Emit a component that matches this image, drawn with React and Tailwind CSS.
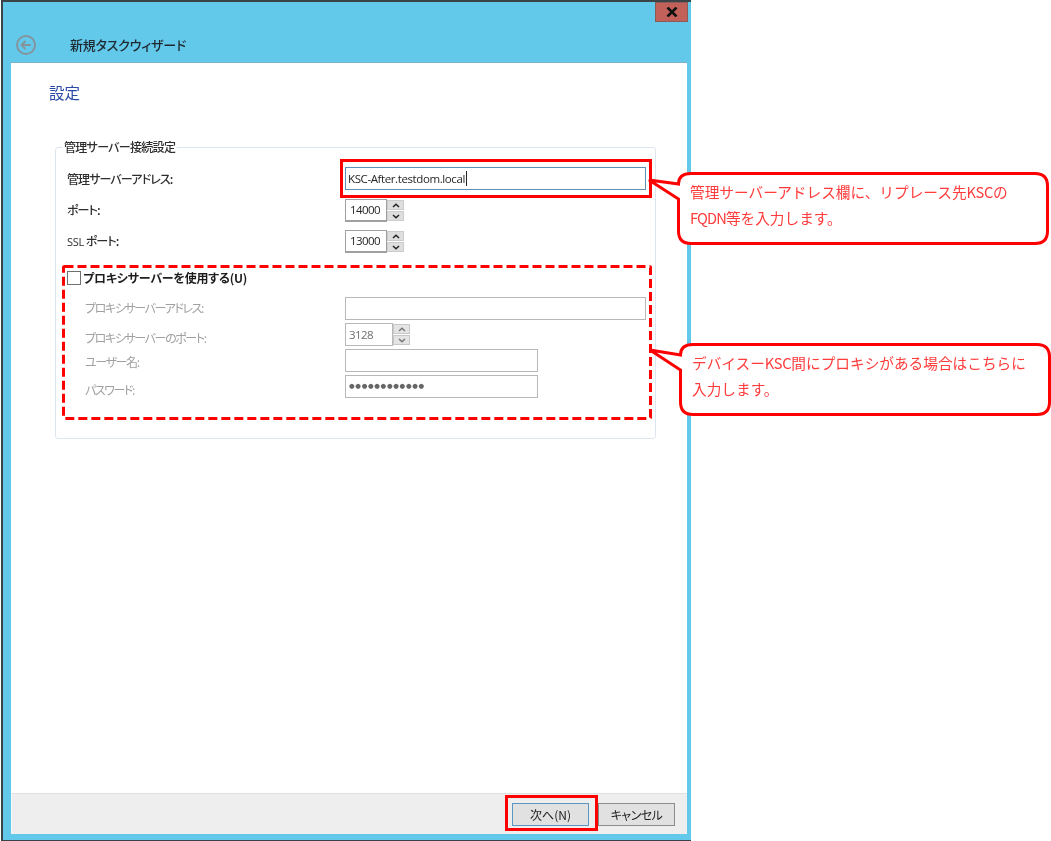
const jp = "font-['Noto_Sans_CJK_JP','Noto_Sans',sans-serif] [font-feature-settings:'palt']";

function Field({ w = "w-[301px]", disabled, active, children }) {
  const border = active ? "border-[#5f8fb5]" : disabled ? "border-[#b8b8b8]" : "border-[#a9a9a9]";
  return (
    <div className={`${w} shrink-0 h-[23px] border ${border} bg-white flex items-center pl-[2px] text-[11.5px] font-['Open_Sans',sans-serif] ${disabled ? "text-[#6d6d6d]" : "text-[#262626]"}`}>
      {children}
    </div>
  );
}

function Chevron({ up, disabled }) {
  return (
    <svg width="8" height="5" viewBox="0 0 8 5" fill="none" stroke={disabled ? "#777" : "#222"} strokeWidth="1.5">
      <path d={up ? "M1 4L4 1.2L7 4" : "M1 1L4 3.8L7 1"} />
    </svg>
  );
}

function Spin({ value, disabled }) {
  const btn = "h-[10px] w-[17px] flex items-center justify-center " + (disabled ? "bg-[#e4e4e4] border border-[#c8c8c8]" : "bg-[#dedede] border border-[#cccccc]");
  return (
    <div className="flex h-[23px] shrink-0">
      <div className={`${disabled ? "w-[48px] border-[#b8b8b8] text-[#6d6d6d] pl-[3px]" : "w-[42px] border-[#a0a0a0] border-b-2 text-[#262626] pl-[4px]"} border bg-white flex items-center text-[11.5px] tracking-[-0.6px] font-['Open_Sans',sans-serif]`}>
        {value}
      </div>
      <div className="flex flex-col justify-center gap-[1px]">
        <div className={btn}><Chevron up disabled={disabled} /></div>
        <div className={btn}><Chevron disabled={disabled} /></div>
      </div>
    </div>
  );
}

function Row({ label, mt, disabled, shift = "", children }) {
  return (
    <div className={`flex items-center h-[23px] ${mt}`}>
      <div className={`${disabled ? "w-[260px] ml-[18px] text-[#a0a0a0] tracking-[-1.4px]" : "w-[278px] text-[#2e2e2e] font-medium tracking-[-0.9px]"} shrink-0 text-[12px] leading-none ${shift}`}>
        {label}
      </div>
      {children}
    </div>
  );
}

function Bubble({ width, height, tip, className, children }) {
  const w = width, h = height, r = 14;
  const d = `M${r} 1.5 H${w - r} Q${w - 1.5} 1.5 ${w - 1.5} ${r} V${h - r} Q${w - 1.5} ${h - 1.5} ${w - r} ${h - 1.5} H${r} Q1.5 ${h - 1.5} 1.5 ${h - r} V27 L${tip[0]} ${tip[1]} L1.5 12 Q1.5 1.5 ${r} 1.5 Z`;
  return (
    <div className={`absolute ${className}`}>
      <svg className="absolute left-0 top-0 overflow-visible" width={w} height={h} fill="white" stroke="#ff0000" strokeWidth="3">
        <path d={d} />
      </svg>
      <div className="relative pl-[13px] pt-[7px] text-[14.67px] leading-[26px] text-[#ff3b3b] font-['Noto_Sans_CJK_JP',sans-serif] [font-feature-settings:normal]">
        {children}
      </div>
    </div>
  );
}

const Ksc = () => <span className="tracking-[-0.3px]">KSC</span>;

export default function App() {
  return (
    <div className={`relative w-[1051px] h-[841px] bg-white overflow-hidden blur-[0.4px] ${jp}`}>
      <div className="w-[690px] h-[841px] ml-[1px] border-l-2 border-t-2 border-b border-l-[#3a4347] border-t-[#3a4347] border-b-[#3a4347] bg-[#63c9eb] flex flex-col">
        <div className="h-[60px] shrink-0 relative flex items-end">
          <div className="flex items-center h-[36px] ml-[12px] pt-[1px]">
            <svg width="22" height="22" viewBox="0 0 22 22" fill="none" stroke="#84949c" strokeWidth="2">
              <circle cx="11" cy="11" r="9" />
              <path d="M16 11H7M10.5 7L6.5 11L10.5 15" />
            </svg>
            <div className="ml-[33px] text-[13px] font-medium text-[#1f2a30] tracking-[-0.2px]">新規タスクウィザード</div>
          </div>
          <div className="absolute right-[3px] top-0 w-[33px] h-[20px] bg-[#c2605a] border border-[#8e5a55] flex items-center justify-center">
            <svg width="12" height="10" viewBox="0 0 12 10" stroke="#111" strokeWidth="2.6" fill="none">
              <path d="M1.5 0.5L10.5 9.5M10.5 0.5L1.5 9.5" />
            </svg>
          </div>
        </div>

        <div className="flex-1 ml-[8px] mr-[4px] mb-[6px] flex flex-col border-t border-[#7fb0c6] min-h-0">
          <div className="flex-1 bg-white pl-[39px] pr-[31px] min-h-0">
            <div className="text-[15.5px] leading-[22px] text-[#2b4aa8] mt-[18px] ml-[-1px]">設定</div>
            <div className="relative mt-[44px] ml-[5px] w-[601px] h-[292px] border border-[#dde6ee] rounded-[3px] px-[11px] pt-[19px]">
              <div className="absolute left-[6px] top-[-8px] bg-white px-[2px] text-[12px] leading-[14px] font-medium text-[#2e2e2e] tracking-[-0.7px]">管理サーバー接続設定</div>
              <Row label="管理サーバーアドレス:">
                <Field active>
                  <span className="tracking-[-0.4px]">KSC-After.testdom.local</span>
                  <span className="w-[1px] h-[15px] bg-[#222] ml-[1px]" />
                </Field>
              </Row>
              <Row label="ポート:" mt="mt-[9px]" shift="-translate-y-[1px]"><Spin value="14000" /></Row>
              <Row label={<><span className="font-['Open_Sans',sans-serif] text-[11px] tracking-[-0.3px]">SSL</span> ポート:</>} mt="mt-[8px]" shift="-translate-y-[1px]"><Spin value="13000" /></Row>
              <div className="flex items-center mt-[18px] h-[14px]">
                <div className="w-[14px] h-[14px] border border-[#707070] bg-white" />
                <div className="ml-[2px] text-[12px] font-bold text-[#1d1d1d] tracking-[-0.2px]">プロキシサーバーを使用する(U)</div>
              </div>
              <Row label="プロキシサーバーアドレス:" mt="mt-[12px]" disabled shift="-translate-y-[1px]"><Field disabled /></Row>
              <Row label="プロキシサーバーのポート:" mt="mt-[3px]" disabled shift="translate-y-[3px]"><Spin value="3128" disabled /></Row>
              <Row label="ユーザー名:" mt="mt-[3px]" disabled shift="translate-y-[1px]"><Field disabled w="w-[193px]" /></Row>
              <Row label="パスワード:" mt="mt-[3px]" disabled shift="translate-y-[3px]">
                <Field disabled w="w-[193px]">
                  <span className="text-[#666666] text-[6.5px] tracking-[0.65px] pl-[1px] font-['DejaVu_Sans',sans-serif]">●●●●●●●●●●●●</span>
                </Field>
              </Row>
            </div>
          </div>
          <div className="h-[41px] shrink-0 bg-[#eeeeee] border-t border-[#e0e0e0] border-l border-l-[#f6f6f6] flex justify-end items-start pt-[9px] pr-[12px] gap-[9px]">
            <button className="w-[77px] h-[23px] bg-[#e1e1e1] border border-[#5c97c2] text-[12px] text-[#222] flex items-center justify-center">次へ(N)</button>
            <button className="w-[77px] h-[23px] bg-[#e1e1e1] border border-[#8c8c8c] text-[12px] text-[#222] flex items-center justify-center tracking-[-0.5px]">キャンセル</button>
          </div>
        </div>
      </div>

      <div className="absolute left-[340px] top-[159px] w-[312px] h-[39px] border-[3px] border-[#ff0000]" />
      <svg className="absolute left-[62px] top-[265px]" width="590" height="155" fill="none" stroke="#ff0000" strokeWidth="3" strokeDasharray="9 4">
        <rect x="1.5" y="1.5" width="587" height="152" rx="1" />
      </svg>
      <div className="absolute left-[505px] top-[795px] w-[93px] h-[36px] border-[3px] border-[#ff0000]" />

      <Bubble className="left-[677px] top-[172px]" width={372} height={73} tip={[-28, 8]}>
        <div>管理サーバーアドレス欄に、リプレース先<Ksc />の</div>
        <div><span className="tracking-[-0.9px]">FQDN</span>等を入力します。</div>
      </Bubble>
      <Bubble className="left-[679px] top-[343px]" width={372} height={73} tip={[-29, 7]}>
        <div>デバイスー<Ksc />間にプロキシがある場合はこちらに</div>
        <div>入力します。</div>
      </Bubble>
    </div>
  );
}
